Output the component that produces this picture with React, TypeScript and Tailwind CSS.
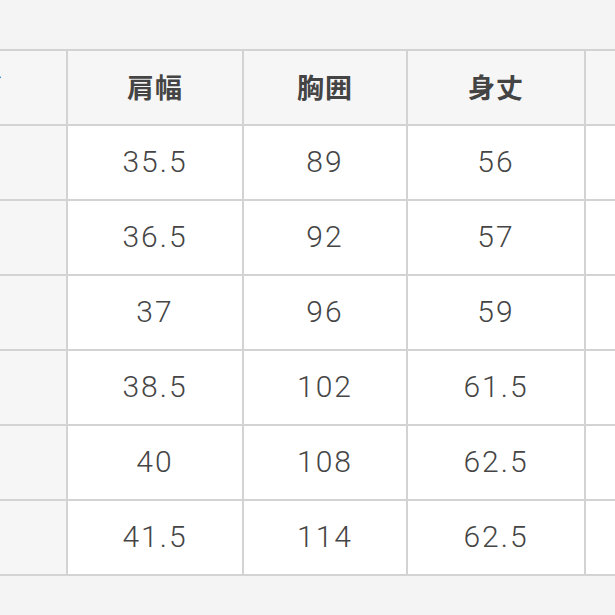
import React from 'react';

const headers = ['サイズ', '肩幅', '胸囲', '身丈', '袖丈'];

const rows: string[][] = [
  ['XS', '35.5', '89', '56', '58'],
  ['S', '36.5', '92', '57', '59'],
  ['M', '37', '96', '59', '60'],
  ['L', '38.5', '102', '61.5', '61'],
  ['XL', '40', '108', '62.5', '62'],
  ['XXL', '41.5', '114', '62.5', '63'],
];

export default function App() {
  return (
    <div
      className="w-[615px] h-[615px] overflow-hidden bg-[#f4f4f4] pt-[49px]"
      style={{ fontFamily: 'Roboto, "Noto Sans CJK JP", sans-serif' }}
    >
      <div className="ml-[-146px] w-[960px] grid grid-cols-[210px_174px_162px_176px_1fr] auto-rows-[73px] gap-[2px] bg-[#d3d3d3] border-2 border-[#d3d3d3]">
        {headers.map(h => (
          <div
            key={h}
            className="bg-[#f6f6f6] flex items-center justify-center text-[27px] font-bold text-[#444444] tracking-[1px]"
            style={{ fontFamily: '"Noto Sans CJK JP", sans-serif' }}
          >
            {h}
          </div>
        ))}
        {rows.map(r =>
          r.map((v, i) => (
            <div
              key={r[0] + i}
              className={`flex items-center justify-center pb-[2px] text-[30px] font-light text-[#454545] tracking-[2px]
                ${i === 0 ? 'bg-[#f6f6f6]' : 'bg-white'}`}
            >
              {v}
            </div>
          ))
        )}
      </div>
    </div>
  );
}
